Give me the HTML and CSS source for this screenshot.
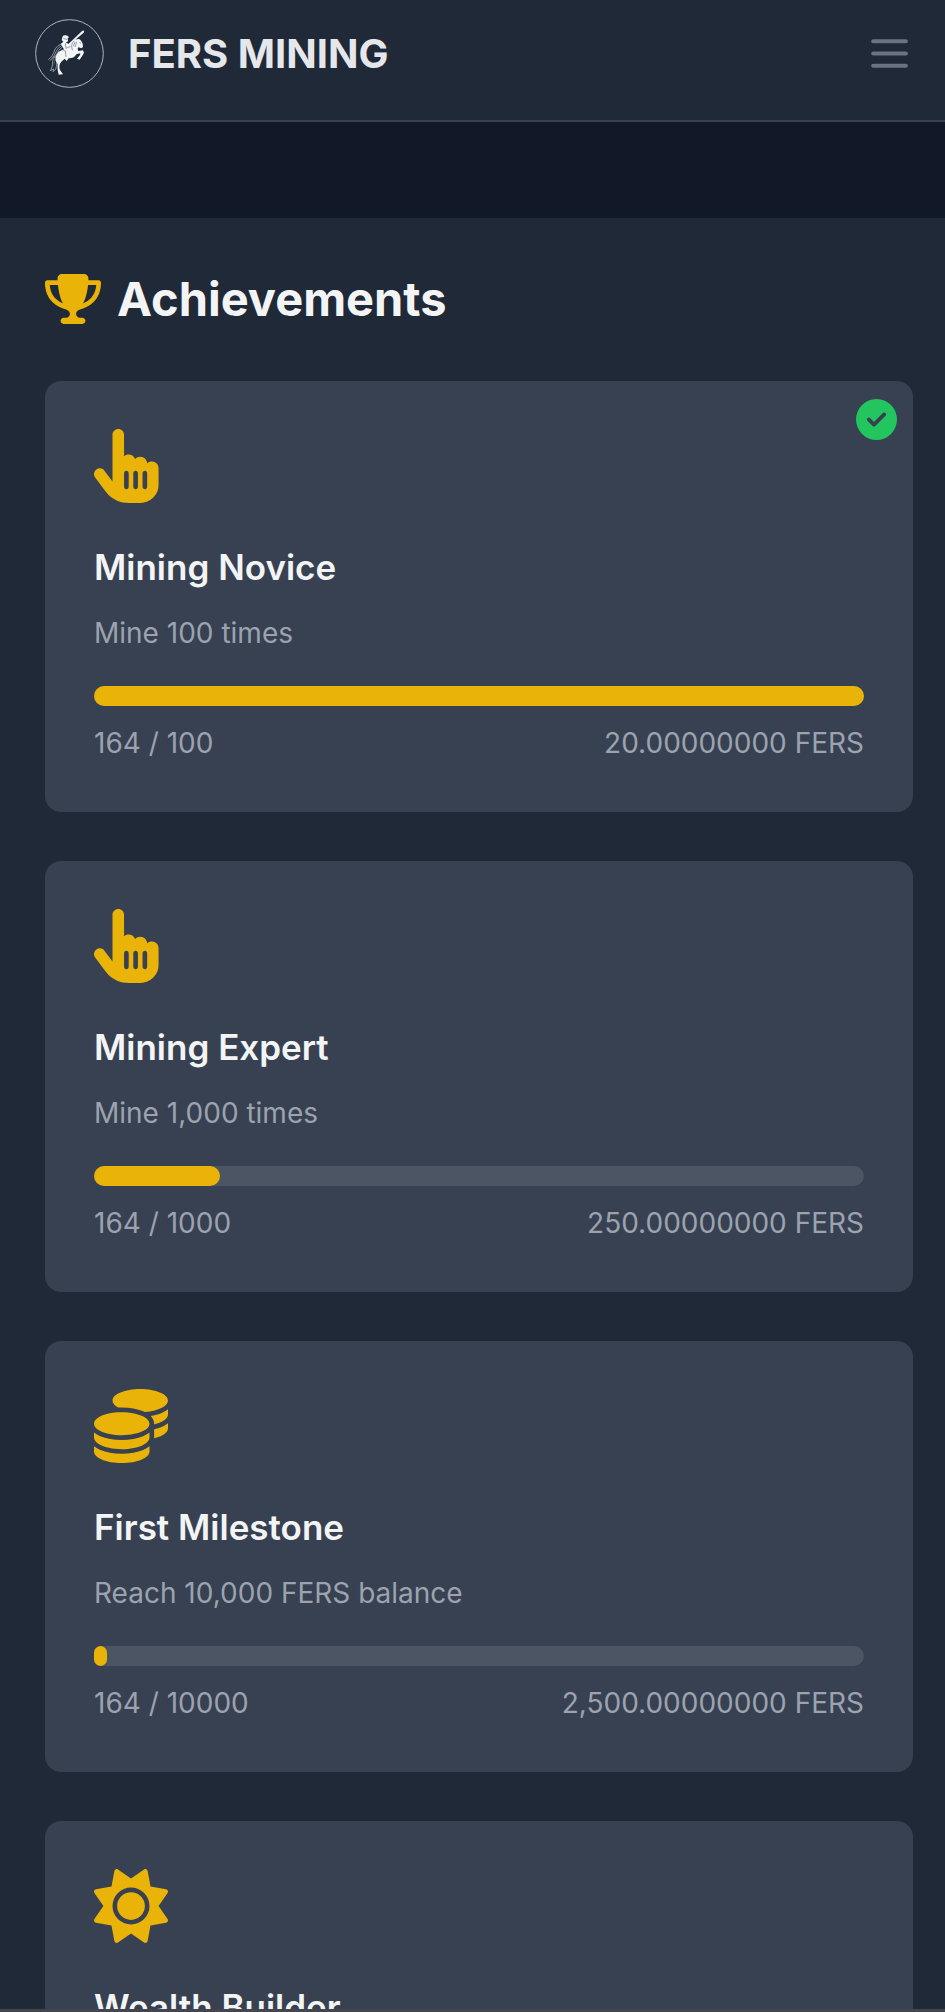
FILE: index.html
```html
<!DOCTYPE html>
<html lang="en">
<head>
<meta charset="utf-8">
<meta name="viewport" content="width=device-width, initial-scale=1">
<title>FERS Mining</title>
<link rel="stylesheet" href="styles.css">
</head>
<body>
<svg class="sprite" aria-hidden="true">
  <symbol id="hand" viewBox="0 0 448 512"><path d="M128 40c0-22.1 17.9-40 40-40s40 17.9 40 40V188.2c8.5-7.6 19.7-12.2 32-12.2c20.6 0 38.2 13 45 31.2c8.8-9.3 21.2-15.2 35-15.2c25.3 0 46 19.5 47.9 44.3c8.5-7.7 19.8-12.3 32.1-12.3c26.5 0 48 21.5 48 48v112c0 70.7-57.3 128-128 128H234.700c-5 0-9.900-.3-14.700-1c-55.300-5.600-106.200-34-140-79L8 336c-13.300-17.700-9.700-42.700 8-56s42.700-9.700 56 8l56 74.700V40zM240 304c0-8.800-7.200-16-16-16s-16 7.200-16 16v96c0 8.800 7.200 16 16 16s16-7.200 16-16V304zm48-16c-8.800 0-16 7.200-16 16v96c0 8.800 7.200 16 16 16s16-7.200 16-16V304c0-8.800-7.200-16-16-16zm80 16c0-8.800-7.200-16-16-16s-16 7.200-16 16v96c0 8.800 7.200 16 16 16s16-7.200 16-16V304z"/></symbol>
  <symbol id="coins" viewBox="0 0 512 512"><path d="M512 80c0 18-14.300 34.600-38.400 48c-29.100 16.100-72.500 27.500-122.300 30.900c-3.700-1.800-7.400-3.500-11.300-5C300.600 137.400 248.200 128 192 128c-8.300 0-16.400 .2-24.500 .6l-1.100-.6C142.300 114.600 128 98 128 80c0-44.200 86-80 192-80S512 35.800 512 80zM160.700 161.100c10.200-.7 20.700-1.100 31.300-1.100c62.200 0 117.400 12.300 152.500 31.400C369.300 204.900 384 221.700 384 240c0 4-.7 7.900-2.100 11.700c-4.600 13.200-17 25.300-35 35.500c-.4 .2-.9 .5-1.300 .7c-35 19.400-90.800 32-153.600 32c-59.600 0-112.900-11.300-148.200-29.100c-1.900-.9-3.700-1.900-5.500-2.900C14.300 274.600 0 258 0 240c0-34.800 53.400-64.500 128-75.400c10.500-1.500 21.400-2.700 32.700-3.500zM416 240c0-21.900-10.600-39.900-24.100-53.400c28.300-4.400 54.200-11.400 76.200-20.500c16.300-6.800 31.500-15.200 43.900-25.500V176c0 19.300-16.500 37.100-43.800 50.900c-14.600 7.400-32.400 13.700-52.400 18.500c.1-1.800 .2-3.500 .2-5.400zm-32 96c0 18-14.300 34.600-38.400 48c-1.800 1-3.600 1.900-5.500 2.900C304.900 404.700 251.600 416 192 416c-62.800 0-118.600-12.600-153.600-32C14.300 370.600 0 354 0 336V300.600c12.500 10.300 27.600 18.700 43.900 25.500C83.400 342.600 135.800 352 192 352s108.600-9.400 148.100-25.900c7.800-3.200 15.300-6.900 22.400-10.900c6.100-3.400 11.800-7.200 17.200-11.200c1.500-1.100 2.900-2.300 4.300-3.400V336zm32 0V278.100c19-4.200 36.500-9.500 52.100-16c16.300-6.800 31.500-15.200 43.900-25.500V272c0 10.500-5 21-14.900 30.900c-16.300 16.300-45 29.700-81.300 38.400c.1-1.700 .2-3.500 .2-5.300zM192 448c56.200 0 108.600-9.400 148.100-25.900c16.300-6.800 31.500-15.200 43.900-25.500V432c0 44.200-86 80-192 80S0 476.200 0 432V396.600c12.500 10.300 27.600 18.700 43.900 25.500C83.400 438.600 135.800 448 192 448z"/></symbol>
  <symbol id="sun" viewBox="0 0 512 512"><path d="M361.500 1.200c5 2.100 8.600 6.600 9.600 11.900L391 121l107.900 19.800c5.300 1 9.800 4.600 11.900 9.600s1.500 10.700-1.600 15.200L446.900 256l62.300 90.300c3.100 4.500 3.700 10.200 1.600 15.200s-6.600 8.600-11.900 9.600L391 391 371.100 498.900c-1 5.300-4.600 9.800-9.600 11.900s-10.700 1.500-15.200-1.600L256 446.900l-90.300 62.300c-4.500 3.100-10.200 3.700-15.200 1.600s-8.600-6.600-9.600-11.900L121 391 13.100 371.100c-5.300-1-9.800-4.600-11.900-9.600s-1.500-10.700 1.600-15.200L65.100 256 2.800 165.700c-3.100-4.500-3.700-10.200-1.600-15.200s6.600-8.600 11.900-9.600L121 121 140.900 13.100c1-5.300 4.600-9.800 9.600-11.900s10.700-1.500 15.200 1.600L256 65.100 346.300 2.800c4.500-3.100 10.200-3.700 15.200-1.600zM160 256a96 96 0 1 1 192 0 96 96 0 1 1 -192 0zm224 0a128 128 0 1 0 -256 0 128 128 0 1 0 256 0z"/></symbol>
</svg>

<header class="topbar">
  <a class="brand" href="#">
    <svg class="brand-logo" viewBox="30 25 207 207" aria-hidden="true">
      <circle class="logo-ring" cx="133.500" cy="128.500" r="101.500"/>
      <g class="logo-cape">
        <path d="M111 99C99 104 91 111 88 121C85 132 79 139 70 147M110 104C98 112 95 119 91 128C88 136 81 143 75 150M111 110C101 116 100 124 95 131C91 136 86 142 82 143"/>
        <path d="M100 138C88 137 83 143 83 153C83 166 80 174 76 180L86 175L84 183L92 176C96 164 94 156 97 149"/>
      </g>
      <path class="logo-body" d="M113 77C117 72 129 73 132 80L128 83L129 92L122 96L131 99L146 85L172 60L178 60L176 66L151 87C158 84 165 85 167 89C173 96 174 102 174 109L169 113L161 110C157 113 158 117 160 121L174 119L177 126L173 134L164 147L156 144L165 133L166 128L154 131C149 140 142 143 131 143L125 151L119 144L109 153C102 160 102 170 105 178L114 191L101 192C98 180 97 172 98 161L92 150C89 139 96 124 110 119L117 116L111 107L108 99L115 93L110 88Z"/>
      <path class="logo-detail" d="M121 98L123 113L137 107M148 91C139 97 138 109 143 119M150 94L145 107M155 93L150 109M164 94L167 99M115 84L126 86M109 116L121 121L123 139M90 145L86 165"/>
    </svg>
    <span class="brand-name">FERS MINING</span>
  </a>
  <button class="menu-button" type="button" aria-label="Open menu">
    <svg class="menu-icon" viewBox="0 0 24 24" aria-hidden="true"><path d="M4 6h16M4 12h16M4 18h16"/></svg>
  </button>
</header>

<main class="content">
  <section class="panel" aria-labelledby="page-title">
    <h1 class="panel-title" id="page-title">
      <svg class="trophy" viewBox="0 0 576 512" aria-hidden="true"><path d="M400 0H176c-26.500 0-48.100 21.800-47.100 48.200c.2 5.300 .4 10.600 .7 15.800H24C10.700 64 0 74.700 0 88c0 92.600 33.500 157 78.500 200.700c44.300 43.100 98.300 64.800 138.100 75.800c23.400 6.500 39.400 26 39.400 45.600c0 20.900-17 37.900-37.900 37.900H192c-17.700 0-32 14.300-32 32s14.300 32 32 32H384c17.700 0 32-14.300 32-32s-14.300-32-32-32H357.900C337 448 320 431 320 410.100c0-19.600 15.900-39.200 39.400-45.600c39.900-11 93.900-32.700 138.200-75.800C542.500 245 576 180.600 576 88c0-13.300-10.700-24-24-24H446.400c.3-5.200 .5-10.400 .7-15.800C448.100 21.800 426.500 0 400 0zM48.900 112h84.400c9.100 90.100 29.200 150.300 51.900 190.600c-24.900-11-50.800-26.500-73.200-48.300c-32-31.100-58-76-63-142.300zM464.100 254.300c-22.400 21.800-48.300 37.300-73.200 48.300c22.700-40.300 42.800-100.500 51.900-190.600h84.400c-5.100 66.300-31.100 111.200-63 142.300z"/></svg>
      Achievements
    </h1>
    <div class="cards">
      <article class="card">
        <svg class="badge" viewBox="0 0 512 512" role="img" aria-label="Completed"><path d="M256 512A256 256 0 1 0 256 0a256 256 0 1 0 0 512zM369 209L241 337c-9.400 9.400-24.600 9.400-33.900 0l-64-64c-9.400-9.400-9.400-24.600 0-33.900s24.600-9.400 33.900 0l47 47L335 175c9.400-9.400 24.600-9.400 33.900 0s9.400 24.600 0 33.900z"/></svg>
        <svg class="card-icon" viewBox="0 0 448 512" aria-hidden="true"><use href="#hand"/></svg>
        <h2 class="card-title">Mining Novice</h2>
        <p class="card-text">Mine 100 times</p>
        <div class="track" role="progressbar" aria-label="Mining Novice" aria-valuemin="0" aria-valuemax="100" aria-valuenow="100"><div class="fill" style="width:100%"></div></div>
        <div class="card-stats"><span>164 / 100</span><span>20.00000000 FERS</span></div>
      </article>
      <article class="card">
        <svg class="card-icon" viewBox="0 0 448 512" aria-hidden="true"><use href="#hand"/></svg>
        <h2 class="card-title">Mining Expert</h2>
        <p class="card-text">Mine 1,000 times</p>
        <div class="track" role="progressbar" aria-label="Mining Expert" aria-valuemin="0" aria-valuemax="1000" aria-valuenow="164"><div class="fill" style="width:16.4%"></div></div>
        <div class="card-stats"><span>164 / 1000</span><span>250.00000000 FERS</span></div>
      </article>
      <article class="card">
        <svg class="card-icon" viewBox="0 0 512 512" aria-hidden="true"><use href="#coins"/></svg>
        <h2 class="card-title">First Milestone</h2>
        <p class="card-text">Reach 10,000 FERS balance</p>
        <div class="track" role="progressbar" aria-label="First Milestone" aria-valuemin="0" aria-valuemax="10000" aria-valuenow="164"><div class="fill" style="width:1.64%"></div></div>
        <div class="card-stats"><span>164 / 10000</span><span>2,500.00000000 FERS</span></div>
      </article>
      <article class="card">
        <svg class="card-icon" viewBox="0 0 512 512" aria-hidden="true"><use href="#sun"/></svg>
        <h2 class="card-title">Wealth Builder</h2>
      </article>
    </div>
  </section>
</main>
<footer class="bottom-edge"></footer>
</body>
</html>
```

FILE: styles.css
```css
* {
  box-sizing: border-box;
}

body {
  margin: 0;
  height: 100vh;
  display: flex;
  flex-direction: column;
  background: #111827;
  color: #f3f4f6;
  font-family: Inter, "Liberation Sans", sans-serif;
}

.sprite {
  display: none;
}

.topbar {
  display: flex;
  flex: none;
  justify-content: space-between;
  align-items: center;
  padding: 19px 31px 32px 35px;
  background: #1f2937;
  border-bottom: 2px solid #374151;
}

.brand {
  display: flex;
  align-items: center;
  gap: 24px;
  color: #e5e7eb;
  text-decoration: none;
}

.brand-logo {
  width: 69px;
  height: 69px;
}

.logo-ring {
  fill: none;
  stroke: #aeb5bf;
  stroke-width: 3;
}

.logo-cape {
  fill: none;
  stroke: #8d95a1;
  stroke-width: 3;
}

.logo-body {
  fill: #f3f4f6;
}

.logo-detail {
  fill: none;
  stroke: #6b7280;
  stroke-width: 2;
}

.brand-name {
  font-size: 40px;
  font-weight: 700;
  line-height: 56px;
}

.menu-button {
  display: flex;
  padding: 0;
  border: 0;
  background: none;
  color: #6b7280;
  cursor: pointer;
}

.menu-icon {
  width: 49px;
  height: 49px;
  fill: none;
  stroke: currentColor;
  stroke-width: 2;
  stroke-linecap: round;
}

.content {
  flex: 1;
  min-height: 0;
  padding-top: 96px;
  overflow-y: auto;
  scrollbar-width: none;
}

.panel {
  padding: 47px 32px 48px 45px;
  background: #1f2937;
}

.panel-title {
  display: flex;
  align-items: center;
  gap: 16px;
  margin: 0 0 48px;
  font-size: 47px;
  font-weight: 700;
  line-height: 68px;
}

.trophy {
  width: 56px;
  height: 50px;
  fill: #eab308;
}

.cards {
  display: grid;
  gap: 49px;
}

.card {
  position: relative;
  padding: 48px 49px;
  border-radius: 16px;
  background: #374151;
}

.badge {
  position: absolute;
  top: 18px;
  right: 16px;
  width: 41px;
  height: 41px;
  fill: #22c55e;
}

.card-icon {
  display: block;
  width: auto;
  height: 74px;
  fill: #eab308;
}

.card-title {
  margin: 35px 0 16px;
  font-size: 35px;
  font-weight: 600;
  line-height: 58px;
}

.card-text {
  margin: 0 0 32px;
  color: #9ca3af;
  font-size: 28px;
  line-height: 42px;
}

.track {
  height: 20px;
  margin-bottom: 16px;
  border-radius: 10px;
  background: #4b5563;
}

.fill {
  height: 100%;
  border-radius: 10px;
  background: #eab308;
}

.card-stats {
  display: flex;
  justify-content: space-between;
  color: #9ca3af;
  font-size: 28px;
  line-height: 42px;
}

.bottom-edge {
  flex: none;
  height: 3px;
  background: #45464d;
}
```
